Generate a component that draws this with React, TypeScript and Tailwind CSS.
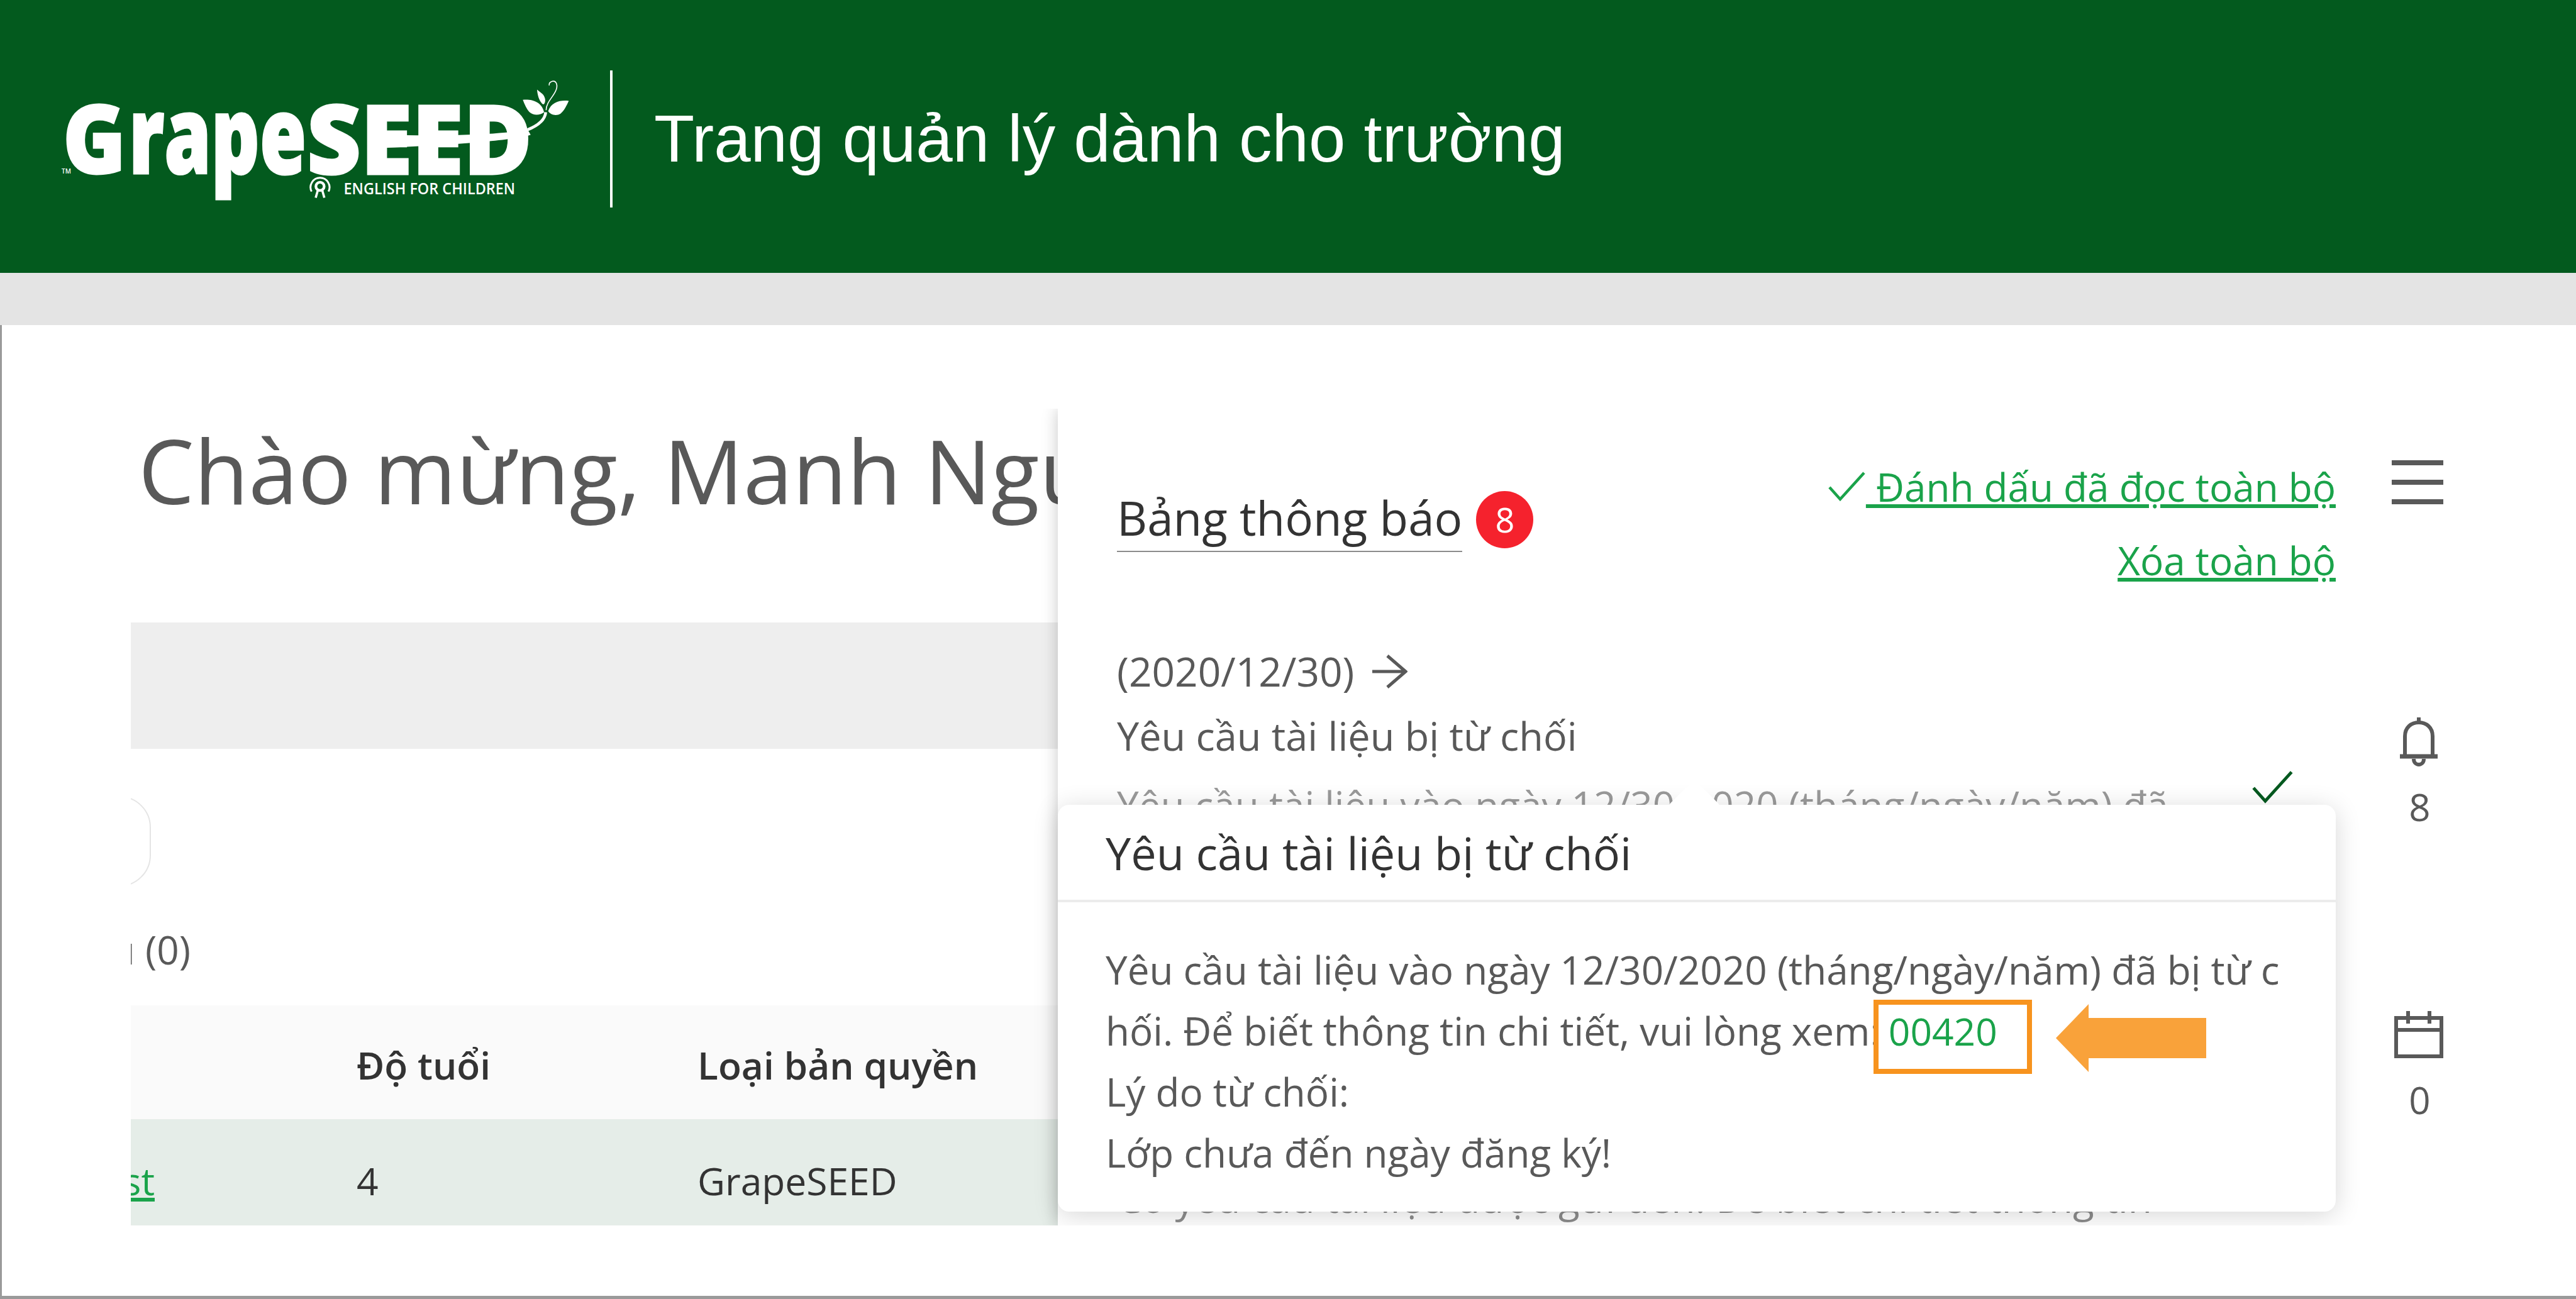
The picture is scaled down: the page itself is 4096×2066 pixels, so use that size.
const Logo = () => (
    <svg viewBox="0 0 920 300" className="h-[300px] w-[920px] shrink-0 text-white" fill="currentColor">
        <text x="98" y="209" fontSize="10" fontFamily="Open Sans" fontWeight="600">
            TM
        </text>
        <text
            x="100"
            y="209"
            fontSize="150"
            fontFamily="Open Sans"
            fontWeight="800"
            textLength="100"
            lengthAdjust="spacingAndGlyphs"
            stroke="currentColor"
            strokeWidth="3"
        >
            G
        </text>
        <text
            x="205"
            y="209"
            fontSize="170"
            fontFamily="Open Sans"
            fontWeight="800"
            textLength="282"
            lengthAdjust="spacingAndGlyphs"
            stroke="currentColor"
            strokeWidth="3"
        >
            rape
        </text>
        <text
            x="488"
            y="210"
            fontSize="152"
            fontFamily="Open Sans"
            fontWeight="800"
            textLength="358"
            lengthAdjust="spacingAndGlyphs"
            stroke="currentColor"
            strokeWidth="3"
        >
            SEED
        </text>
        {/* drawn in crop coordinates: leaves, crossbar and emblem */}
        <g transform="translate(491.5,41) scale(0.3277)">
            <path d="M360 325C600 330 900 330 1060 298L1075 325C950 360 600 378 360 388Z" />
            <path d="M1037 155C1080 150 1130 165 1140 215C1120 230 1090 232 1070 215C1055 200 1045 175 1037 155Z" />
            <path d="M1260 160C1220 155 1175 165 1160 210C1170 228 1200 235 1220 222C1240 205 1250 180 1260 160Z" />
            <path d="M1106 105C1120 118 1140 125 1145 150C1148 170 1138 185 1128 170C1115 155 1108 130 1106 105Z" />
            <path d="M1060 300C1110 280 1145 250 1148 215" fill="none" stroke="currentColor" strokeWidth="14" />
            <path
                d="M1150 205C1150 170 1180 145 1195 115C1210 85 1200 60 1180 65C1170 68 1163 75 1165 85"
                fill="none"
                stroke="currentColor"
                strokeWidth="5"
            />
            <path d="M12 600A46 46 0 1 1 94 600" fill="none" stroke="currentColor" strokeWidth="9" />
            <circle cx="53" cy="575" r="20" fill="none" stroke="currentColor" strokeWidth="13" />
            <path d="M42 595L32 630M64 595L74 630" fill="none" stroke="currentColor" strokeWidth="11" />
            <text
                x="168"
                y="612"
                fontSize="76"
                fontFamily="Open Sans"
                fontWeight="600"
                textLength="832"
                lengthAdjust="spacingAndGlyphs"
            >
                ENGLISH FOR CHILDREN
            </text>
        </g>
    </svg>
);

const Bell = () => (
    <svg viewBox="0 0 64 80" className="h-[80px] w-[64px]" fill="none" stroke="#595959" strokeWidth="6">
        <path d="M32 0V8" />
        <path d="M10 62V30C10 16 20 8 32 8C44 8 54 16 54 30V62" />
        <path d="M2 62H62" strokeWidth="7" />
        <path d="M24 66C24 78 40 78 40 66" />
    </svg>
);

const Calendar = () => (
    <svg viewBox="0 0 78 75" className="h-[75px] w-[78px]" fill="none" stroke="#595959" strokeWidth="6">
        <rect x="3" y="11" width="72" height="61" />
        <path d="M3 30H75M22 0V20M56 0V20" />
    </svg>
);

const CheckMark = ({ className }: { className: string }) => (
    <svg viewBox="0 0 60 48" className={className} fill="none" stroke="currentColor" strokeWidth="4.5">
        <path d="M2 25L19 44L57 2" />
    </svg>
);

const LeftColumn = () => (
    <div className="h-full w-[1474px] shrink-0 overflow-hidden">
        <h1 className="-mt-[5px] pl-[12px] text-[141px] leading-[205px] whitespace-nowrap text-[#595959]">
            Chào mừng, Manh Nguyen
        </h1>
        <div className="mt-[140px] h-[201px] bg-[#eeeeee]" />
        <div className="mt-[75px] -ml-[600px] h-[144px] w-[632px] rounded-[50px] border-2 border-[#e5e5e5]" />
        <div className="mt-[60px] flex w-[95px] justify-end text-[62px] leading-[80px] whitespace-nowrap text-[#595959]">
            <span className="shrink-0">Yêu cầu (0)</span>
        </div>
        <div className="mt-[49px] flex h-[181px] items-center bg-[#fafafa] pt-[10px] pl-[359px] text-[60.5px] font-semibold whitespace-nowrap text-[#333333]">
            <div className="w-[542px]">Độ tuổi</div>
            <div>Loại bản quyền</div>
        </div>
        <div className="flex h-[170px] items-center bg-[#e5ede8] pt-[26px] text-[60.5px] whitespace-nowrap text-[#333333]">
            <div className="flex w-[359px] justify-start">
                <div className="flex w-[38px] justify-end">
                    <a className="shrink-0 text-[#1aa34a] underline">Test</a>
                </div>
            </div>
            <div className="w-[542px]">4</div>
            <div>GrapeSEED</div>
        </div>
    </div>
);

const NotificationPanel = () => (
    <div className="relative flex h-full flex-1 bg-white shadow-[0_0_24px_rgba(0,0,0,0.22)]">
        <div className="w-[2032px] shrink-0 pl-[94px] text-[62px] whitespace-nowrap text-[#595959]">
            <div className="flex justify-between">
                <div className="mt-[131px] flex items-start">
                    <div className="h-[97px] border-b-2 border-[#8c8c8c] text-[74.5px] leading-[84px] font-medium text-[#333333]">
                        Bảng thông báo
                    </div>
                    <div className="ml-[22px] flex h-[91px] w-[91px] items-center justify-center rounded-full bg-[#f5222d] text-[54px] text-white">
                        8
                    </div>
                </div>
                <div className="mt-[76px] flex flex-col items-end text-[#1aa34a]">
                    <div className="flex h-[96px] items-center">
                        <CheckMark className="h-[48px] w-[60px]" />
                        <a className="leading-[96px] whitespace-pre underline"> Đánh dấu đã đọc toàn bộ</a>
                    </div>
                    <a className="mt-[21px] leading-[96px] underline">Xóa toàn bộ</a>
                </div>
            </div>
            <div className="mt-[78px] flex h-[102px] items-center text-[64px]">
                (2020/12/30)
                <svg viewBox="0 0 56 56" className="ml-[29px] h-[56px] w-[56px]" fill="none" stroke="currentColor" strokeWidth="5">
                    <path d="M0 28H53M24 3L53 28L24 53" />
                </svg>
            </div>
            <div className="h-[102px] text-[63px] leading-[102px] font-medium">Yêu cầu tài liệu bị từ chối</div>
            <div className="relative mt-[8px] h-[102px] leading-[102px] text-[#9a9a9a]">
                Yêu cầu tài liệu vào ngày 12/30/2020 (tháng/ngày/năm) đã
                <CheckMark className="absolute top-[-5px] left-[1805px] h-[56px] w-[66px] text-[#03591f]" />
            </div>
            <div className="mt-[523px] leading-[102px] text-[#8c8c8c]">
                Có yêu cầu tài liệu được gửi đến! Để biết chi tiết thông tin
            </div>
        </div>
        <div className="ml-[46px] flex w-[172px] flex-col items-center pt-[82px]">
            <div className="-ml-[5px] flex w-[82px] flex-col gap-[23px]">
                <div className="h-[8px] bg-[#595959]" />
                <div className="h-[8px] bg-[#595959]" />
                <div className="h-[8px] bg-[#595959]" />
            </div>
            <div className="mt-[339px]">
                <Bell />
            </div>
            <div className="mt-[20px] ml-[3px] text-[60px] leading-[84px] text-[#595959]">8</div>
            <div className="mt-[283px]">
                <Calendar />
            </div>
            <div className="mt-[24px] ml-[3px] text-[60px] leading-[84px] text-[#595959]">0</div>
        </div>

        {/* popup over the list */}
        <div className="absolute top-[630px] left-0 w-[2032px] rounded-[18px] bg-white text-[62px] whitespace-nowrap shadow-[0_6px_40px_rgba(0,0,0,0.16)]">
            <div className="absolute top-[-28px] left-[982px] h-[60px] w-[60px] rotate-45 rounded-[6px] bg-white" />
            <div className="relative flex h-[155px] items-center border-b-4 border-[#ececec] pl-[76px] text-[72px] font-medium text-[#333333]">
                Yêu cầu tài liệu bị từ chối
            </div>
            <div className="pt-[59px] pb-[45px] pl-[76px] leading-[97px] text-[#595959]">
                <div>Yêu cầu tài liệu vào ngày 12/30/2020 (tháng/ngày/năm) đã bị từ c</div>
                <div>
                    hối. Để biết thông tin chi tiết, vui lòng xem:{' '}
                    <span className="-ml-[3px] text-[60.5px] text-[#1aa34a]">00420</span>
                </div>
                <div>Lý do từ chối:</div>
                <div>Lớp chưa đến ngày đăng ký!</div>
            </div>
            <div className="absolute top-[310px] left-[1297px] h-[118px] w-[252px] border-[8px] border-[#f7931e]" />
            <svg viewBox="0 0 239 108" className="absolute top-[317px] left-[1587px] h-[108px] w-[239px]">
                <path d="M0 54L52 0V22H239V86H52V108Z" fill="#f9a23a" />
            </svg>
        </div>
    </div>
);

const App = () => {
    return (
        <div className="flex h-[2066px] w-[4096px] flex-col overflow-hidden bg-white font-['Open_Sans',sans-serif]">
            <header className="flex h-[434px] shrink-0 items-center bg-[#035a1e] text-white">
                <Logo />
                <div className="mt-[8px] ml-[50px] h-[218px] w-[4px] bg-white" />
                <div className="mt-[8px] ml-[66px] font-['Liberation_Sans',sans-serif] text-[105px] whitespace-nowrap">
                    Trang quản lý dành cho trường
                </div>
            </header>
            <div className="h-[83px] shrink-0 bg-[#e4e4e4]" />
            <main className="h-[1549px] border-b-[5px] border-l-[3px] border-[#9a9a9a] pt-[133px] pb-[112px] pl-[205px]">
                <div className="flex h-full overflow-hidden">
                    <LeftColumn />
                    <NotificationPanel />
                </div>
            </main>
        </div>
    );
};

export default App;
